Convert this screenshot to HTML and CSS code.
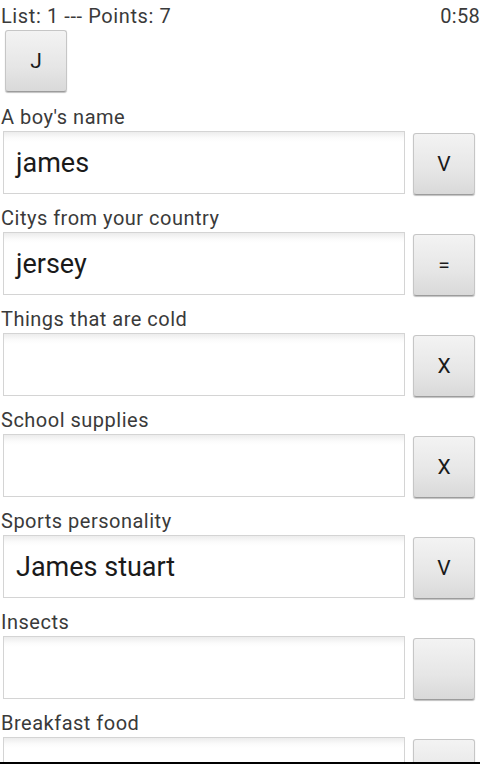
FILE: index.html
```html
<!DOCTYPE html>
<html>
<head>
<meta charset="utf-8">
<link rel="stylesheet" href="styles.css">
</head>
<body>
<div class="screen">
  <div class="header">
    <span class="status">List: 1 --- Points: 7</span>
    <span class="timer">0:58</span>
  </div>
  <div class="letter-row"><button class="btn">J</button></div>

  <div class="row">
    <div class="label">A boy's name</div>
    <div class="field-line">
      <div class="field">james</div>
      <button class="btn">V</button>
    </div>
  </div>
  <div class="row">
    <div class="label">Citys from your country</div>
    <div class="field-line">
      <div class="field">jersey</div>
      <button class="btn">=</button>
    </div>
  </div>
  <div class="row">
    <div class="label">Things that are cold</div>
    <div class="field-line">
      <div class="field"></div>
      <button class="btn">X</button>
    </div>
  </div>
  <div class="row">
    <div class="label">School supplies</div>
    <div class="field-line">
      <div class="field"></div>
      <button class="btn">X</button>
    </div>
  </div>
  <div class="row">
    <div class="label">Sports personality</div>
    <div class="field-line">
      <div class="field">James stuart</div>
      <button class="btn">V</button>
    </div>
  </div>
  <div class="row">
    <div class="label">Insects</div>
    <div class="field-line">
      <div class="field"></div>
      <button class="btn"></button>
    </div>
  </div>
  <div class="row">
    <div class="label">Breakfast food</div>
    <div class="field-line">
      <div class="field"></div>
      <button class="btn"></button>
    </div>
  </div>
</div>
<div class="nav-edge"></div>
</body>
</html>
```
FILE: styles.css
```css
html, body {
  margin: 0;
  padding: 0;
  background: #fff;
  overflow: hidden;
  height: 764px;
}
.screen {
  font-family: Roboto, "Noto Sans", sans-serif;
  color: #333;
  width: 480px;
  height: 764px;
  overflow: hidden;
}
.header {
  display: flex;
  justify-content: space-between;
  height: 30px;
  box-sizing: border-box;
  padding: 6px 1px 0 1px;
  font-size: 20px;
  line-height: 21px;
  letter-spacing: 0.6px;
  color: #3a3a3a;
}
.timer {
  letter-spacing: 0.3px;
  margin-right: -1px;
}
.letter-row {
  padding-left: 5px;
  height: 62px;
  display: flex;
}
.btn {
  width: 62px;
  height: 62px;
  box-sizing: border-box;
  border: 1px solid #c6c6c6;
  border-bottom-color: #9c9c9c;
  border-radius: 3px;
  background: linear-gradient(to bottom, #f3f3f3 0%, #e6e6e6 60%, #d9d9d9 100%);
  box-shadow: 0 1px 1px rgba(0,0,0,0.25);
  font-family: Roboto, "Noto Sans", sans-serif;
  font-size: 21px;
  color: #1a1a1a;
  padding: 0;
  margin: 0;
  flex: none;
}
.row {
  padding-top: 14px;
}
.letter-row + .row {
  padding-top: 15px;
}
.label {
  font-size: 20px;
  line-height: 21px;
  letter-spacing: 0.5px;
  padding-left: 1px;
  color: #3a3a3a;
}
.field-line {
  display: flex;
  align-items: flex-start;
  height: 63px;
  margin-top: 3px;
  padding: 0 5px 0 3px;
  gap: 8px;
}
.field-line .btn {
  margin-top: 2px;
}
.field {
  flex: 1;
  height: 63px;
  box-sizing: border-box;
  border: 1px solid #d4d4d4;
  background: linear-gradient(to bottom, #ececec 0px, #fbfbfb 6px, #fff 10px);
  padding: 1px 12px 0 12px;
  font-size: 27px;
  line-height: 61px;
  color: #1a1a1a;
  white-space: nowrap;
  overflow: hidden;
}
.nav-edge {
  position: fixed;
  left: 0;
  right: 0;
  bottom: 0;
  height: 2px;
  background: #000;
}
```
